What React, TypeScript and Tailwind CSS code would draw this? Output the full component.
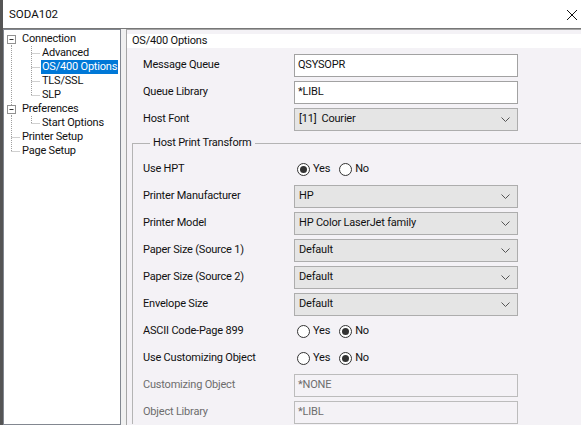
import { ReactNode } from 'react';

const FONT = "font-['Segoe_UI','Roboto','Liberation_Sans',sans-serif]";

type TreeItem = { label: string; level: 0 | 1; lines: string[]; box?: boolean; selected?: boolean };

// gutter drawings per row (x relative to tree inner edge, row is 14px tall)
const TREE: TreeItem[] = [
  { label: 'Connection', level: 0, box: true, lines: ['M7.5 11V14', 'M27.5 13V14'] },
  { label: 'Advanced', level: 1, lines: ['M7.5 0V14', 'M27.5 0V14', 'M27.5 7.5H36'] },
  { label: 'OS/400 Options', level: 1, selected: true, lines: ['M7.5 0V14', 'M27.5 0V14', 'M27.5 7.5H36'] },
  { label: 'TLS/SSL', level: 1, lines: ['M7.5 0V14', 'M27.5 0V14', 'M27.5 7.5H36'] },
  { label: 'SLP', level: 1, lines: ['M7.5 0V14', 'M27.5 0V7.5', 'M27.5 7.5H36'] },
  { label: 'Preferences', level: 0, box: true, lines: ['M7.5 0V3', 'M7.5 11V14', 'M27.5 13V14'] },
  { label: 'Start Options', level: 1, lines: ['M7.5 0V14', 'M27.5 0V7.5', 'M27.5 7.5H36'] },
  { label: 'Printer Setup', level: 0, lines: ['M7.5 0V14', 'M7.5 7.5H16'] },
  { label: 'Page Setup', level: 0, lines: ['M7.5 0V7.5', 'M7.5 7.5H16'] },
];

function TreeRow({ item }: { item: TreeItem }) {
  const w = item.level === 0 ? 16 : 36;
  return (
    <div className="flex h-[14px] items-center">
      <svg width={w} height="14" viewBox={`0 0 ${w} 14`} className="shrink-0">
        {item.lines.map((d, i) => (
          <path key={i} d={d} stroke="#a0a0a0" strokeWidth="1" strokeDasharray="1 1" fill="none" />
        ))}
        {item.box && (
          <g>
            <rect x="3.5" y="3.5" width="8" height="8" fill="#fff" stroke="#919191" />
            <path d="M5.5 7.5H9.5" stroke="#333" />
          </g>
        )}
      </svg>
      <span
        className={`ml-px px-px leading-[14px] whitespace-nowrap ${
          item.selected ? 'bg-[#0078d7] text-white' : 'text-[#111]'
        }`}
      >
        {item.label}
      </span>
    </div>
  );
}

function Chevron() {
  return (
    <svg width="9" height="5" viewBox="0 0 9 5" className="shrink-0">
      <path d="M0.5 0.5L4.5 4.5L8.5 0.5" stroke="#555" fill="none" />
    </svg>
  );
}

function Row({ label, children, disabled }: { label: string; children: ReactNode; disabled?: boolean }) {
  return (
    <div className="flex h-[23px] items-center">
      <span className={`w-[151px] shrink-0 ${disabled ? 'text-[#6d6d6d]' : 'text-[#111]'}`}>{label}</span>
      {children}
    </div>
  );
}

function TextBox({ value, disabled }: { value: string; disabled?: boolean }) {
  return (
    <div
      className={`flex h-[23px] w-[224px] items-center border pl-[3px] ${
        disabled ? 'border-[#bcbcbc] text-[#6d6d6d]' : 'border-[#a2a2a2] bg-white text-[#111]'
      }`}
    >
      {value}
    </div>
  );
}

function Select({ value }: { value: string }) {
  return (
    <div className="flex h-[23px] w-[224px] items-center justify-between border border-[#adadad] bg-[#e5e5e5] pl-[4px] pr-[7px] text-[#111]">
      <span className="whitespace-pre">{value}</span>
      <Chevron />
    </div>
  );
}

function Radio({ checked, label }: { checked?: boolean; label: string }) {
  return (
    <span className="flex items-center gap-[3px]">
      <span className="flex h-[13px] w-[13px] items-center justify-center rounded-full border border-[#333] bg-white">
        {checked && <span className="h-[7px] w-[7px] rounded-full bg-[#333]" />}
      </span>
      <span className="text-[#111]">{label}</span>
    </span>
  );
}

function YesNo({ yes }: { yes: boolean }) {
  return (
    <div className="flex items-center gap-[9px] pl-[3px]">
      <Radio checked={yes} label="Yes" />
      <Radio checked={!yes} label="No" />
    </div>
  );
}

export default function App() {
  return (
    <div
      className={`h-[425px] w-[581px] overflow-hidden border-l-[3px] border-[#555] bg-[#f0f0f0] text-[11px] tracking-[-0.2px] ${FONT}`}
    >
      <div className="flex h-[29px] items-center justify-between border-b border-[#777] bg-white pl-[6px] pr-[3px] pt-px">
        <span className="text-[11.5px] tracking-normal text-[#111]">SODA102</span>
        <svg width="12" height="12" viewBox="0 0 12 12">
          <path d="M1 1L11 11M11 1L1 11" stroke="#111" strokeWidth="1" />
        </svg>
      </div>

      <div className="flex h-[396px] gap-[5px]">
        <div className="w-[118px] shrink-0 border border-[#828790] bg-white pt-[2px]">
          {TREE.map((t) => (
            <TreeRow key={t.label} item={t} />
          ))}
        </div>

        <div className="flex-1 border-l border-t border-[#a5a5a5] bg-[#f4f2f6] pt-[4px]">
          <div className="flex h-[14px] items-center bg-white pl-[5px] text-[#111]">OS/400 Options</div>

          <div className="flex flex-col gap-[4px] pl-[16px] pt-[6px]">
            <Row label="Message Queue">
              <TextBox value="QSYSOPR" />
            </Row>
            <Row label="Queue Library">
              <TextBox value="*LIBL" />
            </Row>
            <Row label="Host Font">
              <Select value="[11]  Courier" />
            </Row>
          </div>

          <fieldset className="mt-[4px] ml-[5px] w-[470px] border-l border-t border-[#b4b4b4] pl-[10px] pt-[7px]">
            <legend className="ml-[7px] px-[3px] leading-[16px] text-[#111]">Host Print Transform</legend>
            <div className="flex flex-col gap-[4px]">
              <Row label="Use HPT">
                <YesNo yes />
              </Row>
              <Row label="Printer Manufacturer">
                <Select value="HP" />
              </Row>
              <Row label="Printer Model">
                <Select value="HP Color LaserJet family" />
              </Row>
              <Row label="Paper Size (Source 1)">
                <Select value="Default" />
              </Row>
              <Row label="Paper Size (Source 2)">
                <Select value="Default" />
              </Row>
              <Row label="Envelope Size">
                <Select value="Default" />
              </Row>
              <Row label="ASCII Code-Page 899">
                <YesNo yes={false} />
              </Row>
              <Row label="Use Customizing Object">
                <YesNo yes={false} />
              </Row>
              <Row label="Customizing Object" disabled>
                <TextBox value="*NONE" disabled />
              </Row>
              <Row label="Object Library" disabled>
                <TextBox value="*LIBL" disabled />
              </Row>
            </div>
          </fieldset>
        </div>
      </div>
    </div>
  );
}
